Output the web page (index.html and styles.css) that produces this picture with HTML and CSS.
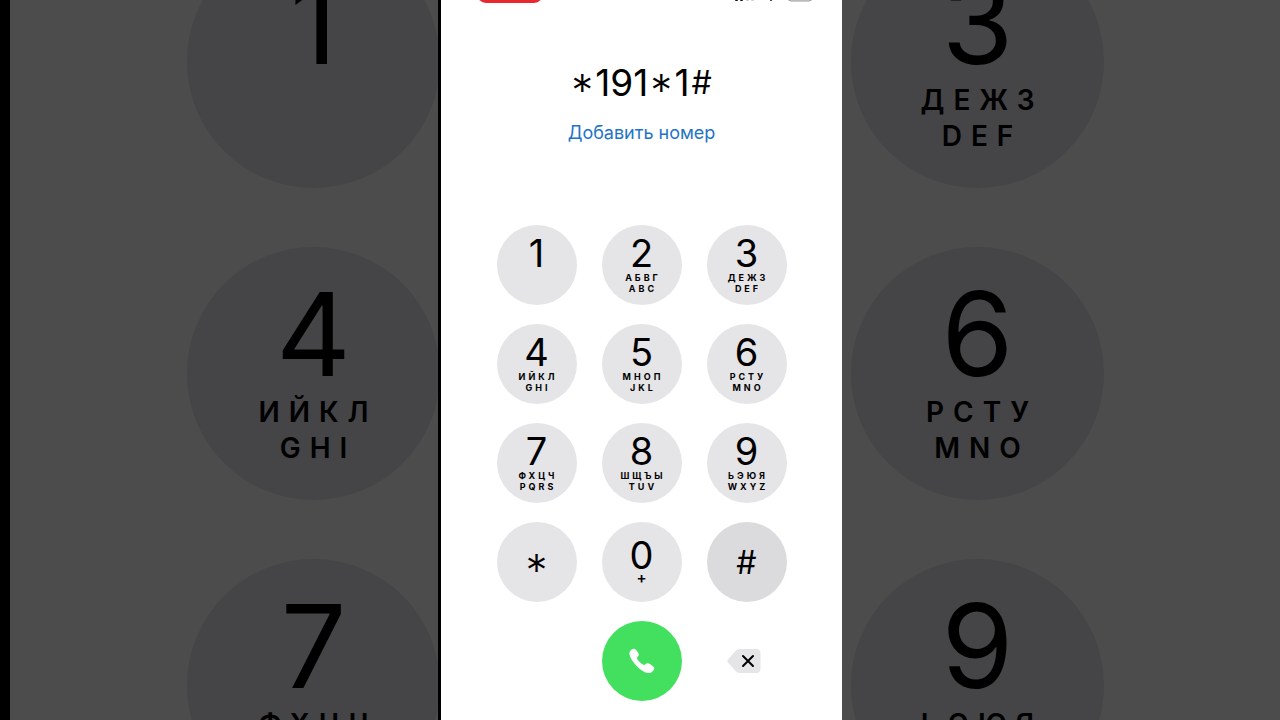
FILE: index.html
```
<!DOCTYPE html>
<html lang="ru">
<head>
  <meta charset="UTF-8">
  <meta name="viewport" content="width=device-width, initial-scale=1.0">
  <title>Телефон</title>
  <link rel="stylesheet" href="styles.css">
</head>
<body>
  <div class="stage">
    <div class="backdrop backdrop-left" aria-hidden="true">
      <div class="big-keys">
        <div class="key big"><span class="digit">1</span></div>
        <div class="key big"><span class="digit">4</span><span class="letters">ИЙКЛ</span><span class="letters">GHI</span></div>
        <div class="key big"><span class="digit">7</span><span class="letters">ФХЦЧ</span><span class="letters">PQRS</span></div>
      </div>
    </div>

    <main class="phone">
      <div class="status-bar">
        <span class="recording"></span>
        <svg class="status-icons" width="80" height="3" viewBox="0 0 80 3">
          <rect x="1" y="-4" width="3" height="5" rx="1" fill="#111"/>
          <rect x="6" y="-5" width="3" height="6" rx="1" fill="#111"/>
          <rect x="12" y="-7" width="3" height="8" rx="1" fill="#ccc"/>
          <rect x="17" y="-9" width="3" height="10" rx="1" fill="#ccc"/>
          <circle cx="37" cy="0" r="1" fill="#111"/>
          <rect x="54" y="-9" width="24" height="10" rx="3" fill="#ddd" stroke="#999"/>
        </svg>
      </div>

      <div class="number"><span class="star">*</span>191<span class="star">*</span>1<span class="hash">#</span></div>
      <a class="add-number" href="#">Добавить номер</a>

      <div class="keypad">
        <button class="key"><span class="digit">1</span></button>
        <button class="key"><span class="digit">2</span><span class="letters">АБВГ</span><span class="letters">ABC</span></button>
        <button class="key"><span class="digit">3</span><span class="letters">ДЕЖЗ</span><span class="letters">DEF</span></button>
        <button class="key"><span class="digit">4</span><span class="letters">ИЙКЛ</span><span class="letters">GHI</span></button>
        <button class="key"><span class="digit">5</span><span class="letters">МНОП</span><span class="letters">JKL</span></button>
        <button class="key"><span class="digit">6</span><span class="letters">РСТУ</span><span class="letters">MNO</span></button>
        <button class="key"><span class="digit">7</span><span class="letters">ФХЦЧ</span><span class="letters">PQRS</span></button>
        <button class="key"><span class="digit">8</span><span class="letters">ШЩЪЫ</span><span class="letters">TUV</span></button>
        <button class="key"><span class="digit">9</span><span class="letters">ЬЭЮЯ</span><span class="letters">WXYZ</span></button>
        <button class="key symbol"><span class="digit"><span class="star">*</span></span></button>
        <button class="key zero"><span class="digit">0</span><span class="plus">+</span></button>
        <button class="key symbol pressed"><span class="digit"><span class="hash">#</span></span></button>

        <button class="call" aria-label="Позвонить">
          <svg width="26" height="26" viewBox="0 0 26 26">
            <path fill="#fff" d="M.5 4.500C.9 2.500 3.300.4 5.300.7c1.500.3 4.100 3.900 4.500 5.300.4 1.500-1.500 2.700-1.800 3.700-.3 1 1 2.700 2.700 4.400s3.500 3.100 4.500 2.800c1.100-.3 2.100-2.100 3.700-1.700 1.600.3 5.500 2.900 6.200 4.300.8 1.800-1.500 4.700-3.700 5.400-2.900.9-8.200-1.500-13-6.200S-.1 8.400.5 4.500z"/>
          </svg>
        </button>
        <button class="delete" aria-label="Удалить">
          <svg width="39" height="24" viewBox="0 0 39 24">
            <path fill="#e5e4e7" d="M1 10.500 8.500 2Q10.300 0 13 0H29Q33.500 0 33.500 4.500V19.500Q33.500 24 29 24H13Q10.300 24 8.500 22L1 13.500Q-.3 12 1 10.500z"/>
            <path fill="none" stroke="#000" stroke-width="2" stroke-linecap="round" d="M16 7 26 17M26 7 16 17"/>
          </svg>
        </button>
      </div>
    </main>

    <div class="backdrop backdrop-right" aria-hidden="true">
      <div class="big-keys">
        <div class="key big"><span class="digit">3</span><span class="letters">ДЕЖЗ</span><span class="letters">DEF</span></div>
        <div class="key big"><span class="digit">6</span><span class="letters">РСТУ</span><span class="letters">MNO</span></div>
        <div class="key big"><span class="digit">9</span><span class="letters">ЬЭЮЯ</span><span class="letters">WXYZ</span></div>
      </div>
    </div>
  </div>
</body>
</html>
```
FILE: styles.css
```
* {
  box-sizing: border-box;
}
body {
  margin: 0;
  background: #000;
  color: #000;
  font-family: Inter, "Liberation Sans", sans-serif;
}
.stage {
  display: grid;
  grid-template-columns: 1fr 404px 1fr;
  height: 100vh;
  overflow: hidden;
}

/* dimmed, enlarged keys on both sides */
.backdrop {
  display: flex;
  align-items: flex-start;
  overflow: hidden;
  background: #4c4c4c;
}
.backdrop-left {
  justify-content: flex-end;
  border-left: 10px solid #000;
}
.big-keys {
  display: grid;
  gap: 59px;
  margin-top: -65px;
}
.backdrop-left .big-keys {
  margin-right: -2px;
}
.backdrop-right .big-keys {
  margin-left: 9px;
}

.phone {
  border-left: 3px solid #000;
  background: #fff;
  display: flex;
  flex-direction: column;
  align-items: center;
}
.status-bar {
  width: 100%;
  height: 3px;
  padding: 0 28px 0 36px;
  display: flex;
  justify-content: space-between;
  align-items: flex-end;
  overflow: hidden;
}
.recording {
  width: 66px;
  height: 22px;
  border-radius: 9px;
  background: #e9272f;
}
.number {
  margin-top: 58px;
  font-size: 37px;
  line-height: 44px;
}
.star {
  font-size: 44px;
  font-weight: 300;
  line-height: 0;
  vertical-align: -10px;
}
.hash {
  font-size: 32px;
  line-height: 0;
  vertical-align: 2px;
}
.number .star,
.number .hash {
  padding: 0 2px;
}
.add-number {
  margin-top: 16px;
  font-size: 18px;
  line-height: 24px;
  color: #1f74c8;
  text-decoration: none;
}

.keypad {
  margin-top: 80px;
  display: grid;
  grid-template-columns: repeat(3, 80px);
  gap: 19px 25px;
}
.key {
  width: 80px;
  height: 80px;
  padding: 9px 0 0;
  border: none;
  border-radius: 50%;
  background: #e5e4e7;
  color: #000;
  font-family: inherit;
  display: flex;
  flex-direction: column;
  align-items: center;
  cursor: pointer;
}
.digit {
  font-size: 38px;
  line-height: 38px;
}
.letters {
  padding-left: 3px;
  font-size: 9px;
  font-weight: 700;
  line-height: 11px;
  letter-spacing: 3px;
}
.zero {
  padding-top: 14px;
}
.plus {
  font-size: 15px;
  font-weight: 600;
  line-height: 8px;
}
.symbol {
  padding-top: 21px;
}
.pressed {
  background: #dbdadd;
}

.big {
  width: 253px;
  height: 253px;
  padding-top: 27px;
  background: #454547;
}
.big .digit {
  font-size: 116px;
  line-height: 120px;
}
.big .letters {
  padding-left: 9px;
  font-size: 28px;
  font-weight: 600;
  line-height: 36px;
  letter-spacing: 9px;
}

.call {
  grid-column: 2;
  width: 80px;
  height: 80px;
  padding: 0;
  border: none;
  border-radius: 50%;
  background: #43e05f;
  display: grid;
  place-items: center;
  cursor: pointer;
}
.delete {
  padding: 0;
  border: none;
  background: none;
  display: grid;
  place-items: center;
  cursor: pointer;
}
```
